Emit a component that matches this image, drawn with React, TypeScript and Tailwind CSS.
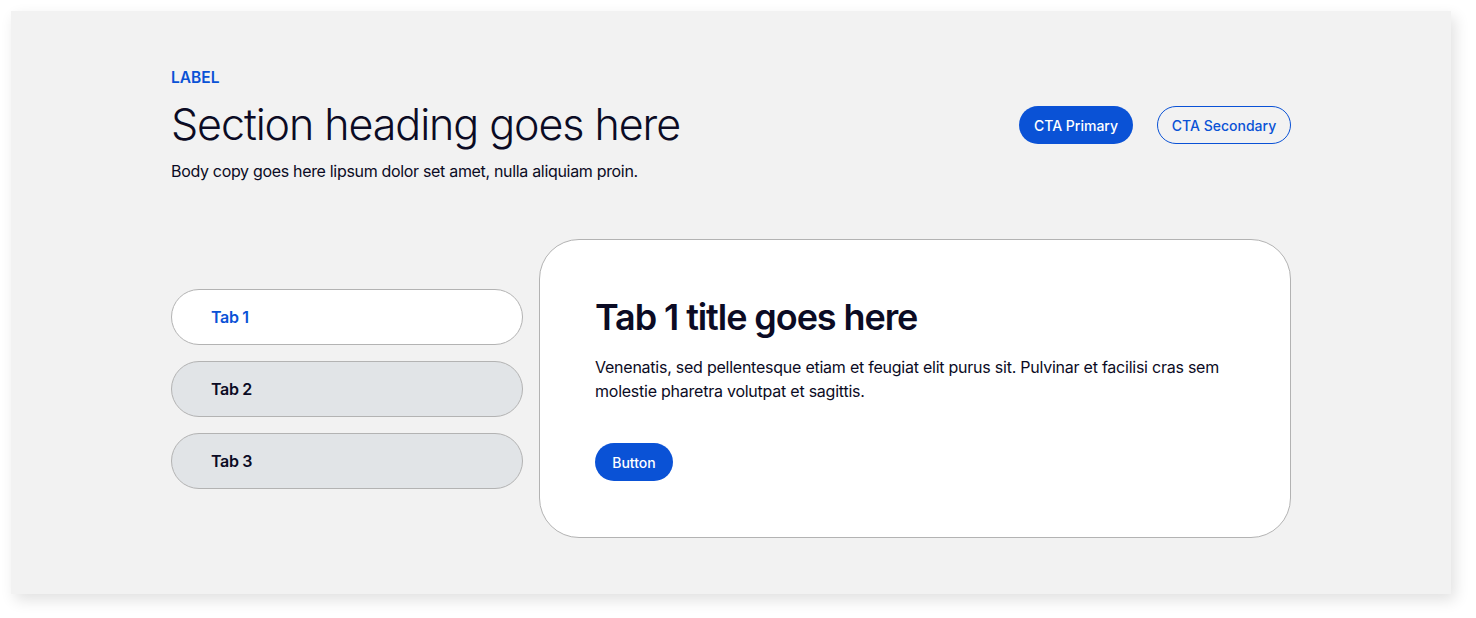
import React, { useState } from 'react';

const tabs = [
  {
    id: 1,
    label: 'Tab 1',
    title: 'Tab 1 title goes here',
    body: 'Venenatis, sed pellentesque etiam et feugiat elit purus sit. Pulvinar et facilisi cras sem molestie pharetra volutpat et sagittis.',
  },
  {
    id: 2,
    label: 'Tab 2',
    title: 'Tab 2 title goes here',
    body: 'Venenatis, sed pellentesque etiam et feugiat elit purus sit. Pulvinar et facilisi cras sem molestie pharetra volutpat et sagittis.',
  },
  {
    id: 3,
    label: 'Tab 3',
    title: 'Tab 3 title goes here',
    body: 'Venenatis, sed pellentesque etiam et feugiat elit purus sit. Pulvinar et facilisi cras sem molestie pharetra volutpat et sagittis.',
  },
];

const App: React.FC = () => {
  const [active, setActive] = useState(1);
  const current = tabs.find((t) => t.id === active) ?? tabs[0];

  return (
    <div className="min-h-screen bg-white pt-[11px] pl-[11px] font-['Inter',sans-serif] text-[#0b0b24]">
      <section className="w-[1440px] bg-[#f2f2f2] px-[160px] py-[56px] shadow-[4px_6px_14px_rgba(0,0,0,0.12)]">
        {/* Header */}
        <div className="flex items-center justify-between">
          <div>
            <div className="text-[15.5px] leading-[22px] font-semibold text-[#0a52d6]">LABEL</div>
            <h2 className="mt-[9px] text-[43px] leading-[52px] font-light tracking-[-0.025em]">
              Section heading goes here
            </h2>
            <p className="mt-[9px] text-[16px] leading-[24px] tracking-[-0.02em]">
              Body copy goes here lipsum dolor set amet, nulla aliquiam proin.
            </p>
          </div>
          <div className="flex items-center gap-[24px]">
            <button className="h-[38px] w-[114px] rounded-full bg-[#0a52d6] text-[14px] font-medium text-white">
              CTA Primary
            </button>
            <button className="h-[38px] w-[134px] rounded-full border border-[#0a52d6] text-[14px] font-medium text-[#0a52d6]">
              CTA Secondary
            </button>
          </div>
        </div>

        {/* Tabs */}
        <div className="mt-[56px] flex items-center gap-[16px]">
          <div className="flex w-[352px] flex-col gap-[16px]">
            {tabs.map((t) => (
              <button
                key={t.id}
                onClick={() => setActive(t.id)}
                className={`h-[56px] rounded-full border border-[#b3b3b3] pl-[39px] text-left text-[16px] font-semibold tracking-[-0.02em] ${
                  t.id === active ? 'bg-white text-[#0a52d6]' : 'bg-[#e1e4e7] text-[#0b0b24]'
                }`}
              >
                {t.label}
              </button>
            ))}
          </div>

          <div className="h-[299px] flex-1 rounded-[40px] border border-[#b3b3b3] bg-white px-[55px] pt-[55px]">
            <h3 className="text-[36px] leading-[44px] font-semibold tracking-[-0.03em]">{current.title}</h3>
            <p className="mt-[16px] max-w-[640px] text-[16px] leading-[24px] tracking-[-0.015em]">{current.body}</p>
            <button className="mt-[40px] h-[38px] w-[78px] rounded-full bg-[#0a52d6] text-[14px] font-medium text-white">
              Button
            </button>
          </div>
        </div>
      </section>
    </div>
  );
};

export default App;
